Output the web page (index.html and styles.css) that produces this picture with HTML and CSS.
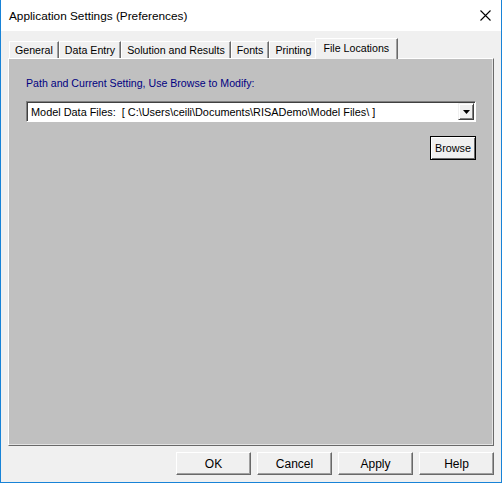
FILE: index.html
```html
<!DOCTYPE html>
<html>
<head>
    <title>Application Settings (Preferences)</title>
    <link rel="stylesheet" href="styles.css">
</head>
<body>
<div class="window">
    <div class="titlebar">
        <span class="title">Application Settings (Preferences)</span>
        <svg class="close" width="11" height="11" viewBox="0 0 11 11">
            <path d="M0.5 0.5 L10.5 10.5 M10.5 0.5 L0.5 10.5" stroke="#000" stroke-width="1.1" fill="none"/>
        </svg>
    </div>

    <div class="client">
        <div class="tabs">
            <div class="tab">General</div>
            <div class="tab">Data Entry</div>
            <div class="tab">Solution and Results</div>
            <div class="tab">Fonts</div>
            <div class="tab">Printing</div>
            <div class="tab active">File Locations</div>
        </div>

        <div class="panel">
            <div class="caption">Path and Current Setting, Use Browse to Modify:</div>
            <div class="combo">
                <span class="combo-text">Model Data Files:&nbsp; [ C:\Users\ceili\Documents\RISADemo\Model Files\ ]</span>
                <span class="combo-btn">
                    <svg width="7" height="4" viewBox="0 0 7 4"><path d="M0 0 H7 L3.5 4 Z" fill="#000"/></svg>
                </span>
            </div>
            <div class="browse-row">
                <button class="btn-browse">Browse</button>
            </div>
        </div>

        <div class="buttons">
            <button class="btn">OK</button>
            <button class="btn">Cancel</button>
            <button class="btn">Apply</button>
            <button class="btn">Help</button>
        </div>
    </div>
</div>
</body>
</html>
```

FILE: styles.css
```css
body {
    margin: 0;
    background: #fff;
}

.window {
    width: 502px;
    height: 483px;
    box-sizing: border-box;
    border: 1px solid #1883d7;
    border-top: none;
    background: #f0f0f0;
    display: flex;
    flex-direction: column;
}

.titlebar {
    height: 31px;
    flex-shrink: 0;
    box-sizing: border-box;
    background: #fff;
    display: flex;
    align-items: center;
    justify-content: space-between;
    padding: 0 10px 0 8px;
}

.title {
    font-family: "Liberation Sans", Arial, sans-serif;
    font-size: 11.8px;
    color: #000;
}

.client {
    padding: 7px 7px 0 7px;
    font-family: "Liberation Sans", Arial, sans-serif;
    font-size: 10.5px;
}

.tabs {
    display: flex;
    align-items: flex-end;
    height: 20px;
    padding-left: 1px;
}

.tab {
    height: 16px;
    line-height: 16px;
    padding: 0 5px 0 5px;
    font-size: 10.65px;
    background: #f0f0f0;
    border-top: 1px solid #fff;
    border-left: 1px solid #fff;
    border-right: 1px solid #696969;
    box-shadow: inset -1px 0 0 #a0a0a0;
    color: #000;
}

.tab.active {
    height: 20px;
    line-height: 18px;
    margin: 0 -2px -1px -2px;
    padding: 0 8px 0 7px;
    position: relative;
    z-index: 1;
}

.panel {
    height: 388px;
    box-sizing: border-box;
    background: #c0c0c0;
    border-top: 1px solid #fff;
    border-left: 1px solid #fff;
    border-right: 1px solid #696969;
    border-bottom: 1px solid #696969;
    box-shadow: inset -1px -1px 0 #e3e3e3;
    padding: 18px 17px 0 17px;
}

.caption {
    color: #000080;
    font-size: 10.6px;
    line-height: 13px;
}

.combo {
    margin-top: 11px;
    height: 21px;
    box-sizing: border-box;
    background: #fff;
    border-top: 1px solid #808080;
    border-left: 1px solid #808080;
    border-right: 1px solid #fff;
    border-bottom: 1px solid #fff;
    box-shadow: inset 1px 1px 0 #404040;
    display: flex;
    align-items: center;
    justify-content: space-between;
    padding: 0 1px 0 4px;
    width: 450px;
}

.combo-text {
    color: #000;
    font-size: 10.9px;
    white-space: pre;
}

.combo-btn {
    width: 14px;
    height: 15px;
    background: #f0f0f0;
    border-top: 1px solid #f0f0f0;
    border-left: 1px solid #f0f0f0;
    border-right: 1px solid #404040;
    border-bottom: 1px solid #404040;
    box-shadow: inset 1px 1px 0 #fff, inset -1px -1px 0 #808080;
    display: flex;
    align-items: center;
    justify-content: center;
}

.browse-row {
    display: flex;
    justify-content: flex-end;
    width: 450px;
    margin-top: 14px;
}

.btn-browse {
    width: 46px;
    height: 24px;
    font-family: "Liberation Sans", Arial, sans-serif;
    font-size: 10.8px;
    background: #f0f0f0;
    border: 1px solid #000;
    box-shadow: inset 1px 1px 0 #fff, inset -1px -1px 0 #696969;
    padding: 0;
    color: #000;
}

.buttons {
    display: flex;
    justify-content: flex-end;
    gap: 6px;
    margin-top: 6px;
}

.btn {
    width: 75px;
    height: 23px;
    font-family: "Liberation Sans", Arial, sans-serif;
    font-size: 12px;
    background: #f0f0f0;
    border-top: 1px solid #fff;
    border-left: 1px solid #fff;
    border-right: 1px solid #696969;
    border-bottom: 1px solid #696969;
    box-shadow: inset -1px -1px 0 #a0a0a0;
    padding: 0;
    color: #000;
}
```
